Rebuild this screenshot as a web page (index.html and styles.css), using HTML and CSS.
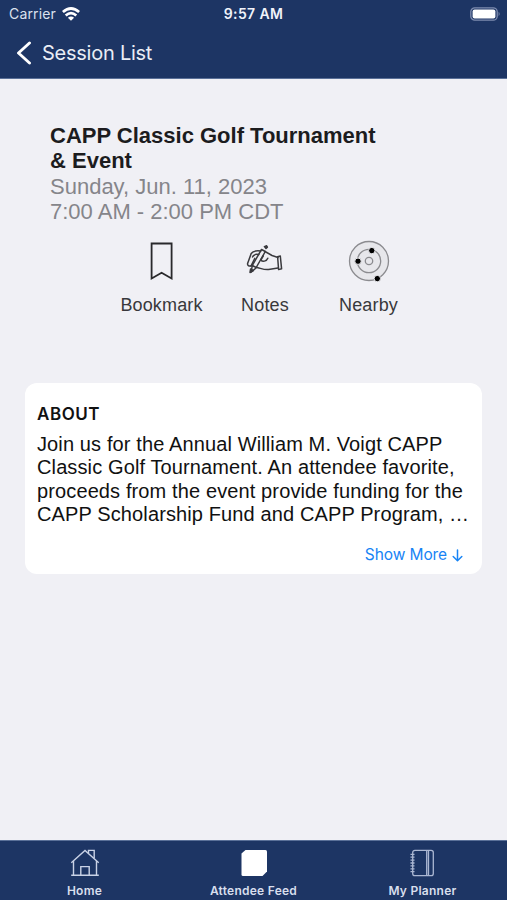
FILE: index.html
```html
<!DOCTYPE html>
<html lang="en">
<head>
    <meta charset="UTF-8">
    <meta name="viewport" content="width=device-width, initial-scale=1.0">
    <title>Session List</title>
    <link rel="stylesheet" href="styles.css">
</head>
<body>
    <header class="header">
        <div class="status-bar">
            <div class="carrier">
                <span class="carrier-name">Carrier</span>
                <svg width="18" height="14" viewBox="0 0 18 14" fill="none" stroke="#fff" stroke-width="2.7">
                    <path d="M0.9 5 Q9 -2 17.1 5"/>
                    <path d="M3.7 8.4 Q9 3.8 14.3 8.4"/>
                    <path d="M9 13.8 L5.9 10.8 Q9 8.2 12.1 10.8 Z" fill="#fff" stroke="none"/>
                </svg>
            </div>
            <span class="time">9:57 AM</span>
            <svg class="battery" width="31" height="14" viewBox="0 0 31 14">
                <rect x="0.8" y="0.8" width="26.4" height="12.4" rx="4" fill="none" stroke="#7e8caf" stroke-width="1.3"/>
                <rect x="2.6" y="2.6" width="22.8" height="8.8" rx="2" fill="#fff"/>
                <path d="M28.6 4.8 Q30.6 7 28.6 9.2 Z" fill="#7e8caf"/>
            </svg>
        </div>
        <div class="nav-bar">
            <svg width="16" height="24" viewBox="0 0 16 24" fill="none" stroke="#fff" stroke-width="2.9" stroke-linecap="round" stroke-linejoin="round">
                <path d="M13.5 2 L2.5 12 L13.5 22"/>
            </svg>
            <span class="nav-title">Session List</span>
        </div>
    </header>

    <main class="content">
        <section class="session">
            <h1>CAPP Classic Golf Tournament<br>&amp; Event</h1>
            <p class="date">Sunday, Jun. 11, 2023</p>
            <p class="hours">7:00 AM - 2:00 PM CDT</p>
        </section>

        <div class="actions">
            <div class="action">
                <svg width="42" height="42" viewBox="0 0 42 42" fill="none" stroke="#29292c" stroke-width="1.8">
                    <path d="M10.6 3.5 H30.6 V38.5 L20.6 32.8 L10.6 38.5 Z"/>
                </svg>
                <span>Bookmark</span>
            </div>
            <div class="action">
                <svg width="42" height="42" viewBox="0 0 42 42" fill="none" stroke="#3a3a3e" stroke-width="1.5" stroke-linecap="round" stroke-linejoin="round">
                    <path d="M17.5 9.5 L21.3 11.5 L12.2 27.5 L8.2 25.5 Z"/>
                    <path d="M8.2 26 L7.2 32 L12 28"/>
                    <path d="M6 32.5 L6.6 29 L9.4 30.6 Z" fill="#29292c"/>
                    <path d="M20.4 6.6 L22.6 5.8 L23.4 7.2 L22 8.4 Z" fill="#29292c"/>
                    <path d="M16.8 11 C13 10.5 8.6 11.5 7.2 13.5 L3.6 23.5 C3.2 25.5 5 26.2 6.6 26 L8.6 25.5"/>
                    <path d="M8.5 17 C9.5 14.8 12 14 14.8 14.6 M7 26 L10.8 18.4"/>
                    <path d="M21 11.5 L28 15.5 L34 17.5 M19.2 16 L16.8 20 C18.5 22 22.5 21.6 23.8 18.3 M12.2 27.3 C17 28.3 20 30 24.5 29.5 L34 28"/>
                    <path d="M33.6 16.7 L36.3 16 L37.6 28.8 L34.6 29.6 Z"/>
                </svg>
                <span>Notes</span>
            </div>
            <div class="action">
                <svg width="42" height="42" viewBox="0 0 42 42" fill="none" stroke="#8b8b8f" stroke-width="1.3">
                    <circle cx="21" cy="21" r="19.5" fill="#e7e7eb"/>
                    <circle cx="21" cy="21" r="11.7"/>
                    <circle cx="21" cy="21" r="3.7"/>
                    <g fill="#000" stroke="#e7e7eb" stroke-width="1">
                        <circle cx="23.8" cy="10.6" r="3.2"/>
                        <circle cx="10" cy="21.2" r="3.2"/>
                        <circle cx="29.3" cy="38.6" r="3.2"/>
                    </g>
                </svg>
                <span>Nearby</span>
            </div>
        </div>

        <section class="about">
            <h2>ABOUT</h2>
            <p class="about-text">
                Join us for the Annual William M. Voigt CAPP<br>
                Classic Golf Tournament. An attendee favorite,<br>
                proceeds from the event provide funding for the<br>
                CAPP Scholarship Fund and CAPP Program, …
            </p>
            <div class="show-more">
                <span>Show More</span>
                <svg width="11" height="13" viewBox="0 0 11 13" fill="none" stroke="#1784f5" stroke-width="1.5" stroke-linecap="round" stroke-linejoin="round">
                    <path d="M5.5 1 V11.5 M1.2 7.5 L5.5 11.8 L9.8 7.5"/>
                </svg>
            </div>
        </section>
    </main>

    <nav class="tab-bar">
        <div class="tab">
            <svg width="30" height="30" viewBox="0 0 30 30" fill="none" stroke="#c9d2e6" stroke-width="1.4">
                <path d="M1.3 14.7 L15 2.4 L28.7 14.7"/>
                <path d="M3.5 13 V27.3 M26.5 13 V27.3 M1.2 27.3 H28.8"/>
                <path d="M10.8 27.3 V18.6 H19.2 V27.3"/>
                <path d="M18.5 5.2 V2.4 H24.2 V10.2"/>
            </svg>
            <span>Home</span>
        </div>
        <div class="tab">
            <svg width="30" height="30" viewBox="0 0 30 30">
                <path d="M6.5 2 H26.5 Q28 2 28 3.5 V23.5 L23.5 28 H4 Q2.5 28 2.5 26.5 V5.5 Z" fill="#fff"/>
            </svg>
            <span>Attendee Feed</span>
        </div>
        <div class="tab">
            <svg width="30" height="30" viewBox="0 0 30 30" fill="none" stroke="#abb7d2" stroke-width="1.3">
                <rect x="4.7" y="2.4" width="20.6" height="25.2" rx="2.2"/>
                <path d="M18.7 2.4 V27.6 M20.5 2.4 V27.6"/>
                <path d="M2.5 6.3 H6.5 M2.5 9.2 H6.5 M2.5 12.1 H6.5 M2.5 15 H6.5 M2.5 17.9 H6.5 M2.5 20.8 H6.5 M2.5 23.7 H6.5"/>
            </svg>
            <span>My Planner</span>
        </div>
    </nav>
</body>
</html>
```
FILE: styles.css
```css
* {
    box-sizing: border-box;
}
body {
    margin: 0;
    height: 900px;
    display: flex;
    flex-direction: column;
    overflow: hidden;
    background-color: #f0f0f5;
    font-family: "Liberation Sans", Arial, sans-serif;
    color: #1c1c1e;
}
h1, h2, p {
    margin: 0;
}
svg {
    display: block;
    flex: none;
}
.header {
    height: 79px;
    background-color: #1d3564;
    border-bottom: 1px solid #5a7098;
    color: #ffffff;
    font-family: Inter, sans-serif;
}
.status-bar {
    height: 27px;
    padding: 0 6px 0 9px;
    display: grid;
    grid-template-columns: 1fr auto 1fr;
    align-items: center;
    font-size: 14px;
}
.carrier {
    display: flex;
    align-items: center;
    gap: 6px;
    color: #dbe1ee;
    letter-spacing: 0.15px;
}
.time {
    font-weight: 600;
    letter-spacing: 0.35px;
    color: #f0f3fa;
    margin-right: 3px;
}
.battery {
    justify-self: end;
}
.nav-bar {
    height: 51px;
    padding-left: 16px;
    display: flex;
    align-items: center;
    gap: 10px;
}
.nav-title {
    font-size: 20px;
    letter-spacing: -0.25px;
    color: #e9edf5;
}
.content {
    flex: 1;
    padding: 44px 25px 0;
}
.session {
    padding-left: 25px;
    font-size: 22px;
    line-height: 25.3px;
}
.session h1 {
    font-size: 22px;
    line-height: 25.3px;
}
.date, .hours {
    color: #85858a;
}
.actions {
    margin-top: 16px;
    display: flex;
    justify-content: center;
    padding-left: 23px;
}
.action {
    width: 103.5px;
    display: flex;
    flex-direction: column;
    align-items: center;
    gap: 12px;
    font-size: 18px;
    line-height: 22px;
    letter-spacing: 0.15px;
    color: #38383b;
}
.about {
    margin-top: 67px;
    height: 191px;
    padding: 21px 12px 0;
    border-radius: 12px;
    background-color: #ffffff;
    color: #111111;
}
.about h2 {
    font-family: Inter, sans-serif;
    font-size: 17px;
    font-weight: 600;
    line-height: 20px;
    letter-spacing: 0.55px;
}
.about-text {
    margin-top: 9px;
    font-size: 20px;
    line-height: 23.3px;
    letter-spacing: 0.12px;
    white-space: nowrap;
}
.show-more {
    margin-top: 19px;
    padding-right: 7px;
    display: flex;
    justify-content: flex-end;
    align-items: center;
    gap: 5px;
    font-family: Inter, sans-serif;
    font-size: 15.5px;
    line-height: 20px;
    letter-spacing: -0.1px;
    color: #1784f5;
}
.tab-bar {
    height: 60px;
    display: grid;
    grid-template-columns: repeat(3, 1fr);
    background-color: #1d3564;
    border-top: 1px solid #5a7098;
}
.tab {
    padding-top: 7px;
    display: flex;
    flex-direction: column;
    align-items: center;
    gap: 5px;
    font-family: Inter, sans-serif;
    font-size: 12px;
    font-weight: 600;
    line-height: 16px;
    letter-spacing: 0.25px;
    color: #d8dfed;
}
```
